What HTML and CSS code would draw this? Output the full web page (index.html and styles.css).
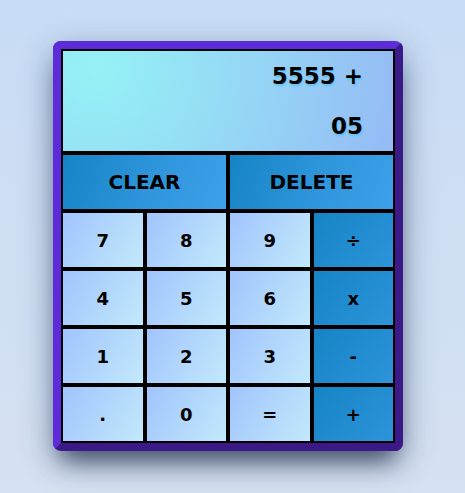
FILE: index.html
```html
<!DOCTYPE html>
<html lang="en">
<head>
<meta charset="utf-8">
<meta name="viewport" content="width=device-width, initial-scale=1">
<title>Calculator</title>
<link rel="stylesheet" href="styles.css">
</head>
<body>
<main class="calculator">
  <div class="display">
    <div class="previous">5555 +</div>
    <div class="current">05</div>
  </div>
  <button class="key wide">CLEAR</button>
  <button class="key wide">DELETE</button>
  <button class="key">7</button>
  <button class="key">8</button>
  <button class="key">9</button>
  <button class="key operator">÷</button>
  <button class="key">4</button>
  <button class="key">5</button>
  <button class="key">6</button>
  <button class="key operator">x</button>
  <button class="key">1</button>
  <button class="key">2</button>
  <button class="key">3</button>
  <button class="key operator">-</button>
  <button class="key">.</button>
  <button class="key">0</button>
  <button class="key">=</button>
  <button class="key operator">+</button>
</main>
</body>
</html>
```
FILE: styles.css
```css
* {
  box-sizing: border-box;
}

body {
  margin: 0;
  min-height: 100vh;
  padding: 41px 62px 42px 53px;
  background: linear-gradient(#c8dcf5, #d6e1f2);
  font-family: "DejaVu Sans", sans-serif;
  font-weight: bold;
  color: #000;
}

.calculator {
  display: grid;
  grid-template-columns: repeat(4, 1fr);
  grid-template-rows: 104px;
  grid-auto-rows: 58px;
  max-width: 350px;
  margin: 0 auto;
  border: 8px solid;
  border-color: #5e2bd9 #3b1a87 #3b1a87 #5e2bd9;
  border-radius: 8px;
  box-shadow:
    0 13px 27px -5px rgba(50, 50, 93, 0.25),
    0 10px 36px rgba(30, 60, 90, 0.3),
    0 18px 22px -10px rgba(20, 40, 60, 0.66);
}

.display {
  grid-column: 1 / -1;
  display: grid;
  grid-template-rows: 1fr 1fr;
  align-items: center;
  padding: 0 30px;
  border: 2px solid #000;
  background: radial-gradient(circle at 10% 20%, #95f2f5 0%, #95bbf5 100%);
  font-size: 23px;
  text-align: right;
  text-shadow: 1px 2px 2px #62c2f5;
}

.key {
  margin: 0;
  padding: 0;
  border: 2px solid #000;
  border-radius: 0;
  background: linear-gradient(120deg, #a1c4fd, #c2e9fb);
  color: inherit;
  font: inherit;
  font-size: 18px;
}

.operator {
  background: linear-gradient(130deg, #1584c5, #2d94da);
}

.wide {
  grid-column: span 2;
  background: linear-gradient(110deg, #1584c5, #2d94da 50%, #3ea1eb);
  font-size: 20px;
}
```
